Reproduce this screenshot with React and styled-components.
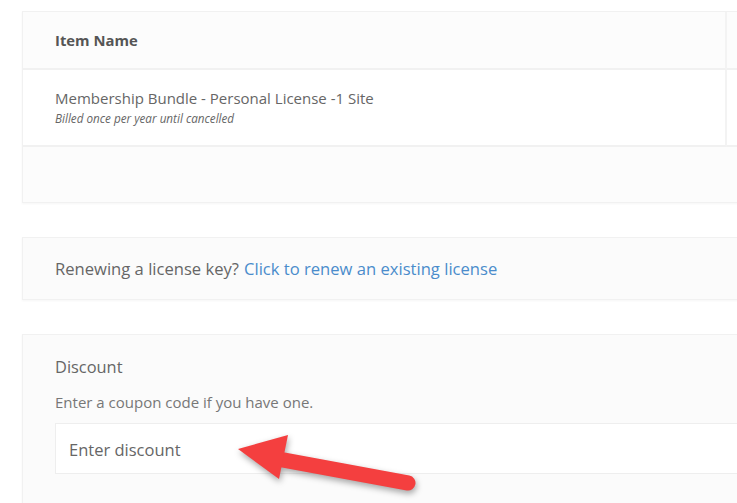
import React from 'react';
import styled, { createGlobalStyle } from 'styled-components';

const GlobalStyle = createGlobalStyle`
  html, body {
    margin: 0;
    padding: 0;
    background: #ffffff;
    overflow: hidden;
  }
  body {
    font-family: "Open Sans", "Liberation Sans", sans-serif;
    color: #666666;
  }
`;

const Page = styled.div`
  position: relative;
  width: 737px;
  height: 503px;
  overflow: hidden;
  padding: 11px 0 0 22px;
  box-sizing: border-box;
`;

const Card = styled.section`
  width: 760px;
  box-sizing: border-box;
  background: ${(p) => p.$bg || '#fbfbfb'};
  border: 1px solid #f1f1f1;
  box-shadow: 0 1px 2px rgba(0, 0, 0, 0.04);
  margin-bottom: ${(p) => p.$gap || 34}px;
`;

const Table = styled.div`
  display: grid;
  grid-template-columns: 704px 1fr;
`;

const Cell = styled.div`
  box-sizing: border-box;
  height: ${(p) => p.$h}px;
  padding: 0 32px;
  display: flex;
  flex-direction: column;
  justify-content: center;
  background: ${(p) => p.$bg || '#ffffff'};
  border-right: ${(p) => (p.$last ? 'none' : '2px solid #f3f3f3')};
  border-bottom: 2px solid #f1f1f1;
`;

const HeadText = styled.span`
  font-weight: 700;
  font-size: 14.8px;
  color: #555555;
`;

const ItemTitle = styled.span`
  font-size: 15px;
  color: #666666;
  line-height: 21px;
`;

const ItemNote = styled.span`
  font-size: 11.7px;
  font-style: italic;
  color: #666666;
  line-height: 17px;
  margin-top: 1px;
`;

const Footer = styled.div`
  height: 55px;
  background: #fcfcfc;
`;

const RenewBar = styled.div`
  height: 61px;
  display: flex;
  align-items: center;
  padding: 0 32px;
  font-size: 16.6px;
  color: #666666;
`;

const Link = styled.a`
  color: #4a8ccb;
  text-decoration: none;
  margin-left: 5px;
`;

const DiscountBody = styled.div`
  padding: 21px 0 30px 32px;
`;

const Label = styled.div`
  font-size: 16.4px;
  line-height: 22px;
  color: #666666;
`;

const Hint = styled.div`
  font-size: 15px;
  line-height: 20px;
  color: #777777;
  margin: 14px 0 11px;
`;

const Input = styled.input`
  display: block;
  box-sizing: border-box;
  width: 720px;
  height: 51px;
  padding: 1px 13px 0;
  border: 1px solid #eeeeee;
  background: #ffffff;
  font-family: inherit;
  font-size: 16.5px;
  outline: none;
  &::placeholder {
    color: #666666;
  }
`;

const Arrow = styled.svg`
  position: absolute;
  left: 0;
  top: 0;
  pointer-events: none;
  filter: drop-shadow(1px 3px 3px rgba(0, 0, 0, 0.35));
`;

export default function App() {
  return (
    <>
      <GlobalStyle />
      <Page>
        <Card $bg="#fcfcfc">
          <Table>
            <Cell $h={58} $bg="#fcfcfc">
              <HeadText>Item Name</HeadText>
            </Cell>
            <Cell $h={58} $bg="#fcfcfc" $last />
            <Cell $h={77}>
              <ItemTitle>Membership Bundle - Personal License -1 Site</ItemTitle>
              <ItemNote>Billed once per year until cancelled</ItemNote>
            </Cell>
            <Cell $h={77} $last />
          </Table>
          <Footer />
        </Card>
        <Card>
          <RenewBar>
            Renewing a license key?
            <Link href="#">Click to renew an existing license</Link>
          </RenewBar>
        </Card>
        <Card>
          <DiscountBody>
            <Label>Discount</Label>
            <Hint>Enter a coupon code if you have one.</Hint>
            <Input placeholder="Enter discount" />
          </DiscountBody>
        </Card>
        <Arrow width="737" height="503" viewBox="0 0 737 503">
          <line x1="278" y1="459" x2="408" y2="483" stroke="#f43f3f" strokeWidth="15" strokeLinecap="round" />
          <polygon points="238,449 288,435 279,479" fill="#f43f3f" />
        </Arrow>
      </Page>
    </>
  );
}
